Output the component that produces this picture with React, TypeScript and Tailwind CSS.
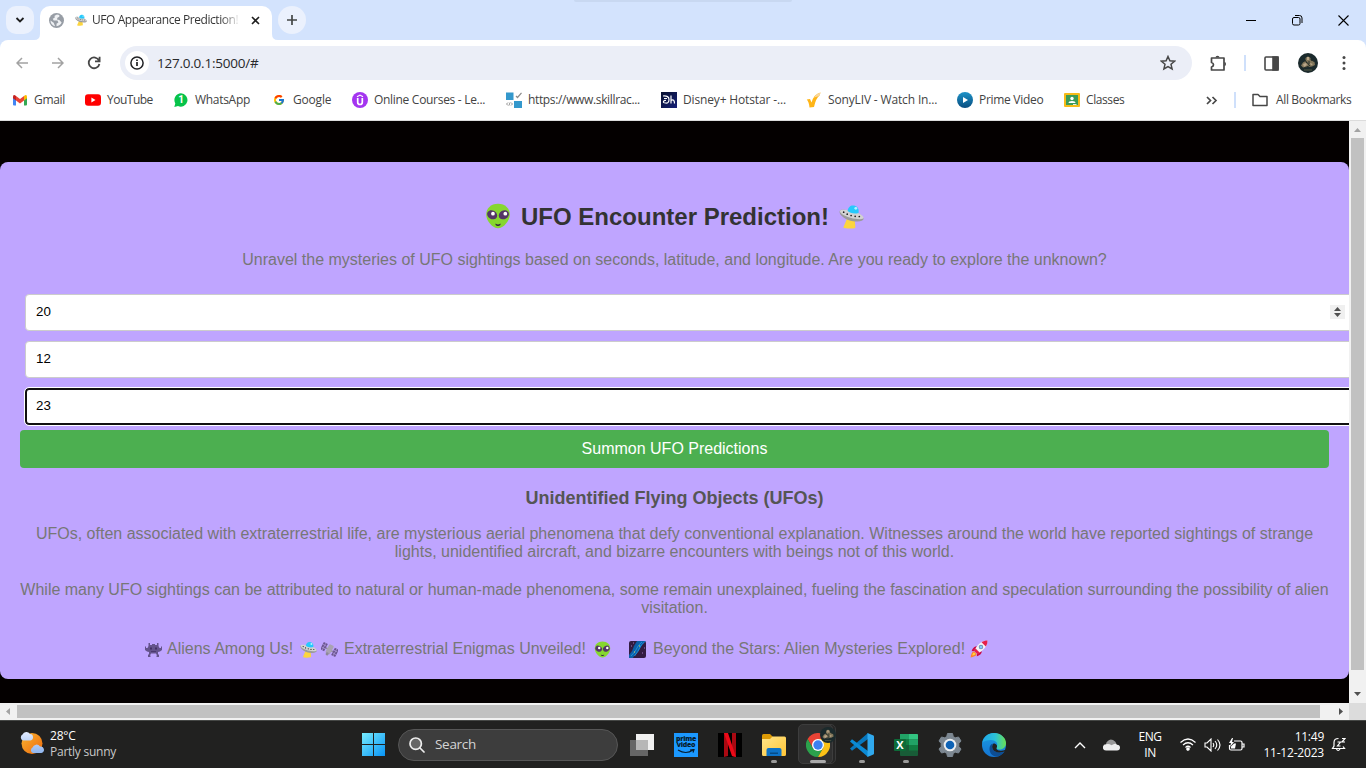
import React from "react";
import { FcGoogle } from "react-icons/fc";

type IconProps = { size?: number };

const ui = "font-['Open_Sans','Noto_Sans',sans-serif]";

/* ---------- Emoji drawings ---------- */

function Alien({ size = 26 }: IconProps) {
  return (
    <svg width={size} height={size} viewBox="0 0 32 32" className="shrink-0">
      <path d="M16 1C7 1 1.500 7 1.500 14c0 8 8 17 14.500 17s14.500-9 14.500-17C30.500 7 25 1 16 1Z" fill="#86d72f" />
      <ellipse cx="8.800" cy="14.500" rx="6.500" ry="5.300" transform="rotate(30 8.800 14.500)" fill="#533566" />
      <ellipse cx="23.200" cy="14.500" rx="6.500" ry="5.300" transform="rotate(-30 23.200 14.500)" fill="#533566" />
      <circle cx="9.800" cy="13.200" r="2.300" fill="#fff" />
      <circle cx="25" cy="13.200" r="2.300" fill="#fff" />
      <path d="M13 25.200q3 2.600 6 0v1.800q-3 2.400-6 0Z" fill="#321b41" />
    </svg>
  );
}

function Saucer({ size = 26 }: IconProps) {
  return (
    <svg width={size} height={size} viewBox="0 0 32 32" className="shrink-0">
      <path d="M11 17 5.500 30c2 1.600 12 2 15.500.3L20 19Z" fill="#fcd53f" />
      <path d="M1 9c-2 5 8 12 17 13 8 1 13 0 13.500-3 .3-3-6-8-16-10C8 7.500 2 6.500 1 9Z" fill="#9b9b9b" />
      <path d="M1 9c1 5 12 9 20 10 6 .8 10 .5 10.500-1 .3-3-6-7.500-16-9.500C8 7 2 6.500 1 9Z" fill="#d3d3d3" />
      <path d="M11 9C11.500 3.500 15.500 1 19.500 2c4.500 1 6.500 5 5.500 9.500-4.500 1.500-11 .5-14-2.500Z" fill="#26c9fc" />
      <circle cx="21.500" cy="5.500" r="1.800" fill="#b4f1ff" />
      <g fill="#212121">
        <circle cx="6" cy="10.500" r="1.100" />
        <circle cx="10.500" cy="13" r="1.100" />
        <circle cx="15.500" cy="14.700" r="1.100" />
        <circle cx="20.700" cy="15.800" r="1.100" />
        <circle cx="26" cy="16" r="1.100" />
      </g>
    </svg>
  );
}

function Monster({ size = 17 }: IconProps) {
  return (
    <svg width={size} height={size} viewBox="0 0 17 17" className="shrink-0">
      <path d="M3.500 2h1.500v2h2V3h3v1h2V2h1.500v3l1 2H16V5.500h1V9l-2 1.500-2 .5v2l1 1v2h-2.500v-1.500h.5l-1-2H6l-1 2h.5V16H3v-2l1-1v-2l-2-.5L0 9V5.500h1V7h1.500l1-2Z" fill="#64538b" />
      <path d="M5 6.500h2v2H5zM10 6.500h2v2h-2z" fill="#433064" />
      <path d="M6 10.500h5" stroke="#4b386e" />
    </svg>
  );
}

function Satellite({ size = 17 }: IconProps) {
  return (
    <svg width={size} height={size} viewBox="0 0 17 17" className="shrink-0">
      <g transform="rotate(28 8.500 8.500)">
        <path d="M0 4.500h4.500v8H0zM12.500 4.500H17v8h-4.500z" fill="#6b5591" />
        <path d="M0 7h4.500M0 10h4.500M12.500 7H17M12.500 10H17M2.300 4.500v8M14.700 4.500v8" stroke="#a994d4" strokeWidth=".7" />
        <path d="M4.500 8h8v1.500h-8z" fill="#8d8798" />
        <rect x="6" y="3.500" width="5" height="9.500" rx="1" fill="#a9a3b2" />
        <circle cx="8.500" cy="13.500" r="1.500" fill="#8d8798" />
      </g>
    </svg>
  );
}

function MilkyWay({ size = 17 }: IconProps) {
  return (
    <svg width={size} height={size} viewBox="0 0 17 17" className="shrink-0">
      <rect width="17" height="17" rx="2" fill="#321b41" />
      <path d="M8 0h9Q14 2 12 6T7 13t-3 4H0v-3l3-4 2-5Z" fill="#0b5fa8" />
      <path d="M13 1Q9 4 8 7t-6 8M15.500 1q-4 3-5 6t-5 8" stroke="#1e91d8" strokeWidth="1" fill="none" />
      <path d="M2 5h1M13 12h1M15 7h1M4 2h1" stroke="#9d7ac0" />
      <path d="M5 11h1M10 5h1" stroke="#e9d35b" />
    </svg>
  );
}

function Rocket({ size = 18 }: IconProps) {
  return (
    <svg width={size} height={size} viewBox="0 0 32 32" className="shrink-0">
      <path d="M7 20c-4 1-5 6-6 11 5-1 10-2 11-6Z" fill="#ff822d" />
      <path d="M7 22c-2 1-2.500 3-3 5.500 2.500-.5 5-1 6-3Z" fill="#fcd53f" />
      <path d="M12 11C8 11 4 15 3 20l7-1ZM21 20c0 4-4 8-9 9l1-7Z" fill="#ca0b4a" />
      <path d="M31 1C22 1 15 6 8 18l6 6C26 17 31 10 31 1Z" fill="#f4f4f4" />
      <path d="M31 1c-4 0-7.500 1-10.500 3L28 11.500C30.500 8.500 31 5 31 1ZM10 15l-3 4 6 6 4-3Z" fill="#e6204a" />
      <circle cx="19.500" cy="12.500" r="4" fill="#6e8fb0" />
      <circle cx="19.500" cy="12.500" r="2.500" fill="#83cbff" />
    </svg>
  );
}

/* ---------- Browser icons ---------- */

function Portrait({ size = 20 }: IconProps) {
  return (
    <svg width={size} height={size} viewBox="0 0 20 20" className="shrink-0">
      <circle cx="10" cy="10" r="10" fill="#1b2a2c" />
      <path d="M7.500 5q2.500-3 5 0v2l4 2 .5 3-3 1.500-4 .5-5 .5-2-2 2-3 2.500-1.500Z" fill="#81765a" />
      <path d="M9 4h2v3H9zM5 11l3-1 1 2-3 2zM12 10l3 1-2 1.500z" fill="#b9a689" />
      <path d="M8 8.500 12 13M6 15l5-2M13 7l3 1M7 7l2 3M11 8v3" stroke="#262f2a" strokeWidth="1" />
      <path d="M6 17h8" stroke="#555b45" />
    </svg>
  );
}

function Globe() {
  return (
    <svg width="15" height="15" viewBox="0 0 16 16" className="shrink-0">
      <circle cx="8" cy="8" r="8" fill="#979da5" />
      <path d="M8.500 1.500 6 3v2l-2 1 1 2h4l1 2-2 1.500V14q4-.5 5.500-4L11 7.500 8.500 7 9 5l2-1V2ZM1.500 8 5 10.500 6.500 14Q2 13 1.500 8Z" fill="#eef0f3" />
    </svg>
  );
}

function Gmail() {
  return (
    <svg width="16" height="16" viewBox="0 0 16 16">
      <path d="M1 5v7.500q0 1 1 1h2V7Z" fill="#4285f4" />
      <path d="M12 7v6.500h2q1 0 1-1V5Z" fill="#34a853" />
      <path d="M4 4v4.500l4 3 4-3V4L8 7Z" fill="#ea4335" />
      <path d="M1 4.500v1.800l3 2.200V4Q1.500 2 1 4.500Z" fill="#c5221f" />
      <path d="M15 4.500v1.800l-3 2.200V4Q14.500 2 15 4.500Z" fill="#fbbc04" />
    </svg>
  );
}

function YouTube() {
  return (
    <svg width="16" height="16" viewBox="0 0 16 16">
      <rect y="2.300" width="16" height="11.400" rx="3" fill="#f00" />
      <path d="M6.400 5.600v4.800L10.500 8Z" fill="#fff" />
    </svg>
  );
}

function WhatsApp() {
  return (
    <div className="relative size-4">
      <svg width="16" height="16" viewBox="0 0 16 16">
        <path d="M8 1.300a6.700 6.700 0 1 1-3 12.800L1.300 15l1-3.600A6.700 6.700 0 0 1 8 1.300Z" fill="#07c34a" />
      </svg>
      <span className="absolute inset-0 text-center font-['Roboto',sans-serif] text-[10px] leading-4 font-bold text-white">1</span>
    </div>
  );
}

function Udemy() {
  return (
    <svg width="16" height="16" viewBox="0 0 16 16">
      <circle cx="8" cy="8" r="8" fill="#a435f0" />
      <path d="m5 4.800 3-1.700 3 1.700" fill="none" stroke="#fff" strokeWidth="1.200" />
      <path d="M5.700 6v4.200q0 2.300 2.300 2.300t2.300-2.300V6" fill="none" stroke="#fff" strokeWidth="1.700" />
    </svg>
  );
}

function SkillRack() {
  return (
    <svg width="16" height="16" viewBox="0 0 16 16">
      <path d="M0 .5h7.500V8H0zM8 9h8v7H8z" fill="#3498cc" />
      <path d="m10 4 1.500 1.500L15.500.800" stroke="#8b8b8b" fill="none" strokeWidth="1.200" />
      <path d="m2 10.500-1.500 1.500L2 13.500M5 10.500 6.500 12 5 13.500M4 10.500l-1 3" stroke="#777" strokeWidth=".8" fill="none" />
    </svg>
  );
}

function Hotstar() {
  return (
    <div className="flex size-4 items-center justify-center bg-linear-to-br from-[#09102f] to-[#151f78]">
      <svg width="14" height="10" viewBox="0 0 14 10" fill="none" stroke="#fff" strokeWidth="1.200">
        <path d="M2 3.500h3M1 1q6-.5 6 3.500T3.500 8Q1 8 1.500 6.500T4 5.500M9 .500V8.500M9 5.500q3.500-2 3.500 3" />
      </svg>
    </div>
  );
}

function Sony() {
  return (
    <svg width="16" height="16" viewBox="0 0 16 16">
      <path d="M.8 7.500 4 7l1.500 3.500Q8 2 14.500.5l-1 3Q10 6 8 15l-4.500.5Q3 10 .8 7.500Z" fill="#ffb516" />
      <path d="M8 5.500q2.500-4 6.500-5L13.500 4Z" fill="#f8d79e" />
    </svg>
  );
}

function Prime() {
  return (
    <svg width="16" height="16" viewBox="0 0 16 16">
      <defs>
        <linearGradient id="prime" x2="0" y2="1">
          <stop stopColor="#1e93c8" />
          <stop offset="1" stopColor="#084d80" />
        </linearGradient>
      </defs>
      <circle cx="8" cy="8" r="8" fill="url(#prime)" />
      <path d="M6 5v6l5-3Z" fill="#fff" />
    </svg>
  );
}

function Classroom() {
  return (
    <svg width="16" height="16" viewBox="0 0 16 16">
      <rect y="1" width="16" height="14" rx="1" fill="#f6bb18" />
      <path d="M2 3h12v10H2z" fill="#3b9b57" />
      <circle cx="8" cy="6.500" r="1.700" fill="#fff" />
      <path d="M4.500 11q0-2 3.500-2t3.500 2Z" fill="#fff" />
      <path d="M9 12h3.500v1H9z" fill="#e4eee4" />
    </svg>
  );
}

/* ---------- Taskbar icons ---------- */

function Weather() {
  return (
    <svg width="26" height="26" viewBox="0 0 26 26">
      <defs>
        <linearGradient id="sun" x2="1" y2="1">
          <stop stopColor="#f9b531" />
          <stop offset="1" stopColor="#ed680c" />
        </linearGradient>
        <linearGradient id="cloud" x2="0" y2="1">
          <stop stopColor="#e2ecff" />
          <stop offset="1" stopColor="#8fb5ee" />
        </linearGradient>
      </defs>
      <circle cx="13" cy="12.500" r="10.500" fill="url(#sun)" />
      <path d="M4 9.500a3.300 3.300 0 0 1-.5-6A4.300 4.300 0 0 1 11 3a3.300 3.300 0 0 1 .5 6.500ZM14 22a3 3 0 0 1-.5-5.500 4.200 4.200 0 0 1 7.500-1 3.200 3.200 0 0 1 1.300 6.500Z" fill="url(#cloud)" />
    </svg>
  );
}

function Windows() {
  return (
    <svg width="23" height="23" viewBox="0 0 23 23">
      <defs>
        <linearGradient id="win" x2="1" y2="1" gradientUnits="objectBoundingBox">
          <stop stopColor="#77edff" />
          <stop offset="1" stopColor="#0893f5" />
        </linearGradient>
      </defs>
      <path d="M0 0h11v11H0zM12 0h11v11H12zM0 12h11v11H0zM12 12h11v11H12z" fill="url(#win)" />
    </svg>
  );
}

function TaskView() {
  return (
    <svg width="24" height="22" viewBox="0 0 24 22">
      <path d="M6 0h18v16H6z" fill="#f0f0f0" />
      <path d="M0 6h18v16H0z" fill="#666" />
      <path d="M6 6h12v10H6z" fill="#b7b7b7" />
    </svg>
  );
}

function Netflix() {
  return (
    <svg width="24" height="24" viewBox="0 0 24 24">
      <path d="M0 0h24v24H0z" fill="#000" />
      <path d="M6 0h4v23l-4 1zM14 0h4v24l-4-1z" fill="#a90912" />
      <path d="M6 0h4l8 24-4-1Z" fill="#ed0a18" />
    </svg>
  );
}

function Explorer() {
  return (
    <svg width="24" height="24" viewBox="0 0 24 24">
      <defs>
        <linearGradient id="folder" x2="1" y2="1">
          <stop stopColor="#ffe58a" />
          <stop offset="1" stopColor="#ffc536" />
        </linearGradient>
      </defs>
      <path d="M0 5V2.500Q0 1 1.500 1H8l3 3-2 2H0Z" fill="#dd9a05" />
      <path d="M0 6h8l2.500-2.500h12Q24 3.500 24 5v16.500q0 1.500-1.500 1.500h-21Q0 23 0 21.500Z" fill="url(#folder)" />
      <path d="M4.500 23v-6q0-2 2-2h11q2 0 2 2v6Z" fill="#0d72c6" />
      <path d="M8 19.500h8v1.500H8z" fill="#064b85" />
    </svg>
  );
}

function Chrome() {
  return (
    <svg width="24" height="24" viewBox="0 0 24 24">
      <path d="M1.600 6A12 12 0 0 1 22.400 6H12l-5.200 9Z" fill="#e94335" />
      <path d="M1.600 6 6.800 15 12 18l5.200-3L12 24A12 12 0 0 1 1.600 6Z" fill="#2ba24c" />
      <path d="M22.400 6A12 12 0 0 1 12 24l5.200-9V9L12 6Z" fill="#fbc116" />
      <circle cx="12" cy="12" r="6" fill="#fff" />
      <circle cx="12" cy="12" r="4.700" fill="#3c80f0" />
    </svg>
  );
}

function Code() {
  return (
    <svg width="24" height="24" viewBox="0 0 24 24">
      <path d="M18 0 0 15.500l2 2.200L18 6Z" fill="#0877bd" />
      <path d="M18 24 0 8.500l2-2.200L18 18Z" fill="#0b8ad5" />
      <path d="m17.500 0 6 2.500Q24 3 24 3.500v17q0 .7-.6 1L17.500 24Z" fill="#30a9ee" />
    </svg>
  );
}

function Excel() {
  return (
    <div className="relative h-[22px] w-6">
      <svg width="24" height="22" viewBox="0 0 24 22">
        <rect x="6" width="18" height="22" rx="1" fill="#185c37" />
        <path d="M6 0h9v5.500H6z" fill="#21a366" />
        <path d="M15 0h8q1 0 1 1v4.500h-9z" fill="#33c481" />
        <path d="M6 5.500h9V11H6z" fill="#107c41" />
        <path d="M15 5.500h9V11h-9z" fill="#21a366" />
        <path d="M15 11h9v5.500h-9z" fill="#107c41" />
        <rect y="5" width="12" height="12" rx="1" fill="#0d6b38" />
      </svg>
      <span className="absolute top-[5px] left-0 w-3 text-center font-['Open_Sans',sans-serif] text-[11px] leading-3 font-bold text-white">X</span>
    </div>
  );
}

function Settings() {
  return (
    <svg width="24" height="24" viewBox="0 0 24 24">
      <path
        d="m9.500.500-.8 3.200-2 1.100L3.500 4 1 8l2.200 2.500v3L1 16l2.500 4 3.200-.8 2 1.100.8 3.200h5l.8-3.200 2-1.100 3.200.8 2.500-4-2.200-2.500v-3L23 8l-2.500-4-3.200.8-2-1.100-.8-3.200Z"
        fill="#7c8791"
        stroke="#7c8791"
        strokeLinejoin="round"
      />
      <circle cx="12" cy="12" r="6.300" fill="#eceef0" />
      <circle cx="12" cy="12" r="4.300" fill="#0d62b5" />
    </svg>
  );
}

function Edge() {
  return (
    <svg width="24" height="24" viewBox="0 0 24 24">
      <defs>
        <linearGradient id="edgeTop" x2="1">
          <stop stopColor="#1ea6ec" />
          <stop offset=".55" stopColor="#2cc2d6" />
          <stop offset="1" stopColor="#6ae052" />
        </linearGradient>
        <linearGradient id="edgeLeft" x2="0" y2="1">
          <stop stopColor="#1b9de2" />
          <stop offset="1" stopColor="#1474d2" />
        </linearGradient>
      </defs>
      <circle cx="12" cy="12" r="12" fill="url(#edgeLeft)" />
      <path d="M.2 10C1 4 6 0 12 0c7 0 12 5 12 10 0 4-3 6.500-6.500 6.500-3 0-4-1.200-3-2.500C17 10 13 7 9 7c-4 0-7.500 1-8.800 3Z" fill="url(#edgeTop)" />
      <path d="M8 13c-2 6 2 11 8 10.500 3-1 5.500-3 6.800-5.200C17 21 10 19 10 13.500c0-1.500.5-2.500 1.500-3Q9 10.500 8 13Z" fill="#0d4d93" />
      <path d="M11.500 10.500C9 13 10 18 15 19.200c3 .7 6 0 7.800-.9q.5-1 .2-1.300c-3 1.500-9 .8-8.500-2 1.500-2 0-4.500-3-4.500Z" fill="#222" />
    </svg>
  );
}

/* ---------- Browser chrome ---------- */

function TabStrip() {
  return (
    <div className="flex h-10 items-start bg-[#d3e3fd] pl-1.5">
      <button className="mt-1.5 flex size-7 items-center justify-center rounded-[10px] bg-[#ebf1fd]">
        <svg width="10" height="8" viewBox="0 0 10 8" fill="none" stroke="#1f1f1f" strokeWidth="1.800">
          <path d="m1.500 2 3.500 3.500L8.500 2" />
        </svg>
      </button>
      <svg width="6" height="6" viewBox="0 0 6 6" className="mt-[34px]">
        <path d="M6 0v6H0Q6 6 6 0Z" fill="#fff" />
      </svg>
      <div className="mt-1.5 flex h-[34px] w-[232px] items-center rounded-t-[10px] bg-white pb-1.5">
        <div className="ml-[9px] flex w-[26px]"><Globe /></div>
        <Saucer size={12} />
        <span className={`${ui} ml-[5px] w-[147px] bg-linear-to-r from-[#333] from-88% to-[#3331] bg-clip-text text-[12px] tracking-[-0.44px] whitespace-nowrap text-transparent`}>
          UFO Appearance Prediction!
        </span>
        <svg width="9" height="9" viewBox="0 0 9 9" className="ml-3" stroke="#1f1f1f" strokeWidth="1.600">
          <path d="m1 1 7 7M8 1 1 8" />
        </svg>
      </div>
      <svg width="6" height="6" viewBox="0 0 6 6" className="mt-[34px]">
        <path d="M0 0v6h6Q0 6 0 0Z" fill="#fff" />
      </svg>
      <button className="mt-1.5 flex size-7 items-center justify-center rounded-full bg-[#ebf1fd]">
        <svg width="12" height="12" viewBox="0 0 12 12" stroke="#444746" strokeWidth="1.700">
          <path d="M6 1v10M1 6h10" />
        </svg>
      </button>
      <div className="ml-[268px] h-0.5 w-[218px] rounded-b bg-[#c8d8f1]" />
      <div className="mt-[15px] ml-auto flex pr-[17px] text-black">
        <svg width="10" height="11" viewBox="0 0 10 11" stroke="currentColor"><path d="M0 5.500h10" /></svg>
        <svg width="11" height="11" viewBox="0 0 11 11" fill="none" stroke="currentColor" className="ml-9">
          <rect x=".5" y="2.500" width="7.500" height="7.500" rx="1.500" />
          <path d="M3 .5h4.500q2.500 0 2.500 2.500v5" />
        </svg>
        <svg width="11" height="11" viewBox="0 0 11 11" stroke="currentColor" strokeWidth="1.100" className="ml-[35px]">
          <path d="m.5.500 10 10M10.500.500l-10 10" />
        </svg>
      </div>
    </div>
  );
}

function Toolbar() {
  return (
    <div className="h-[46px] bg-[#d3e3fd]">
      <div className="flex h-full items-center rounded-t-lg bg-white text-[#474747]">
        <svg width="12" height="12" viewBox="0 0 12 12" fill="none" stroke="#a2a2a2" strokeWidth="1.500" className="ml-4">
          <path d="M12 6H1M6 1 1 6l5 5" />
        </svg>
        <svg width="12" height="12" viewBox="0 0 12 12" fill="none" stroke="#a2a2a2" strokeWidth="1.500" className="ml-6">
          <path d="M0 6h11M6 1l5 5-5 5" />
        </svg>
        <svg width="14" height="14" viewBox="0 0 14 14" fill="none" stroke="currentColor" strokeWidth="1.800" className="ml-[23px]">
          <path d="M12 4.500A5.400 5.400 0 1 0 12.400 8M12.600.800v4.500H8" />
        </svg>
        <div className="ml-[19px] flex h-[34px] w-[1072px] items-center rounded-full bg-[#ebeef7] pl-[5px]">
          <span className="flex size-6 items-center justify-center rounded-full bg-white">
            <svg width="14" height="14" viewBox="0 0 14 14" fill="none" stroke="#202124" strokeWidth="1.500">
              <circle cx="7" cy="7" r="6.100" />
              <path d="M7 6v4M7 3.500V5" strokeWidth="1.700" />
            </svg>
          </span>
          <span className={`${ui} ml-2 text-[13.500px] tracking-[-0.23px] text-[#28292b]`}>127.0.0.1:5000/#</span>
          <svg width="16" height="16" viewBox="0 0 16 16" fill="none" stroke="currentColor" strokeWidth="1.500" className="mr-4 ml-auto">
            <path d="m8 1.500 1.900 4.300 4.700.4-3.600 3.100 1.100 4.600L8 11.500l-4.100 2.400L5 9.300 1.400 6.200l4.700-.4Z" />
          </svg>
        </div>
        <svg width="17" height="17" viewBox="0 0 17 17" fill="none" stroke="currentColor" strokeWidth="1.700" strokeLinejoin="round" className="ml-[18px]">
          <path d="M1.500 3H14v12H1.500v-3q2-.5 2-2.200t-2-2.300Z" />
          <path d="M5.500 2.500a2 1.800 0 0 1 4 0ZM14.500 7a1.500 2 0 0 1 0 4Z" fill="currentColor" stroke="none" />
        </svg>
        <div className="ml-[17px] h-4 w-0.5 bg-[#cfe0fb]" />
        <svg width="15" height="15" viewBox="0 0 15 15" fill="none" stroke="currentColor" strokeWidth="1.600" className="ml-[18px]">
          <rect x="1" y="1" width="13" height="13" rx="1" />
          <path d="M9 1h5v13H9z" fill="currentColor" />
        </svg>
        <div className="ml-[19px]"><Portrait /></div>
        <svg width="4" height="16" viewBox="0 0 4 16" fill="currentColor" className="ml-6">
          <circle cx="2" cy="2.500" r="1.500" /><circle cx="2" cy="8" r="1.500" /><circle cx="2" cy="13.500" r="1.500" />
        </svg>
      </div>
    </div>
  );
}

function Bookmark({ icon, label, width }: { icon: React.ReactNode; label: string; width: string }) {
  return (
    <div className={`flex shrink-0 items-center gap-1.5 ${width}`}>
      {icon}
      <span className="whitespace-nowrap">{label}</span>
    </div>
  );
}

function BookmarksBar() {
  return (
    <div className={`${ui} flex h-[35px] items-center border-b border-[#dcdcdc] bg-white pb-1.5 pl-3 text-[12px] tracking-[-0.3px] text-[#434343]`}>
      <Bookmark icon={<Gmail />} label="Gmail" width="w-[73px]" />
      <Bookmark icon={<YouTube />} label="YouTube" width="w-[88px] tracking-[-0.5px]" />
      <Bookmark icon={<WhatsApp />} label="WhatsApp" width="w-[98px]" />
      <Bookmark icon={<FcGoogle className="m-[2px] size-3" />} label="Google" width="w-[81px] tracking-[-0.2px]" />
      <Bookmark icon={<Udemy />} label="Online Courses - Le..." width="w-[154px]" />
      <Bookmark icon={<SkillRack />} label="https://www.skillrac..." width="w-[155px] tracking-[-0.35px]" />
      <Bookmark icon={<Hotstar />} label="Disney+ Hotstar -..." width="w-[145px] tracking-[-0.15px]" />
      <Bookmark icon={<Sony />} label="SonyLIV - Watch In..." width="w-[151px] tracking-[-0.15px]" />
      <Bookmark icon={<Prime />} label="Prime Video" width="w-[107px]" />
      <Bookmark icon={<Classroom />} label="Classes" width="w-[142px] tracking-[-0.4px]" />
      <svg width="12" height="9" viewBox="0 0 12 9" fill="none" stroke="#474747" strokeWidth="1.700">
        <path d="m1 1 3.500 3.500L1 8M6.500 1 10 4.500 6.500 8" />
      </svg>
      <div className="ml-4 h-4 w-0.5 bg-[#cfe0fb]" />
      <svg width="16" height="14" viewBox="0 0 16 14" fill="none" stroke="#474747" strokeWidth="1.500" strokeLinejoin="round" className="mr-2 ml-4">
        <path d="M1 12.500v-11h5L8 3.500h7v9Z" />
      </svg>
      <span className="tracking-[-0.35px] whitespace-nowrap">All Bookmarks</span>
    </div>
  );
}

/* ---------- Web page ---------- */

function Field({ value, focused = false, spinner = false }: { value: string; focused?: boolean; spinner?: boolean }) {
  return (
    <div
      className={`flex h-[37px] w-[1349px] shrink-0 items-center rounded-[4px] bg-white pb-px text-[13.333px] text-black ${
        focused ? "border-2 border-[#101010] pl-[9px] outline outline-white" : "border border-[#ccc] pl-[10px]"
      }`}
    >
      <span className="w-[1294px]">{value}</span>
      {spinner && (
        <svg width="15" height="14" viewBox="0 0 15 14">
          <path d="M0 0h15v14H0z" fill="#f0f0f0" />
          <path d="M4 6h7L7.500 2ZM4 8h7l-3.500 4Z" fill="#505050" />
        </svg>
      )}
    </div>
  );
}

function PageContent() {
  return (
    <main className="h-[582px] w-[1349px] overflow-hidden bg-[#040000] pt-[41px] font-['Liberation_Sans',Arial,sans-serif] text-[16px] leading-[18px] text-[#777]">
      <section className="h-[517px] overflow-hidden rounded-[8px] bg-[#bfa5ff] px-5 pt-10 text-center">
        <h1 className="flex h-[29px] items-center justify-center text-[24px] leading-[28px] font-bold text-[#333]">
          <span className="-mt-px"><Alien size={26} /></span>
          <span className="mr-2.5 ml-2.5">UFO Encounter Prediction!</span>
          <Saucer size={25} />
        </h1>
        <p className="mt-5">
          Unravel the mysteries of UFO sightings based on seconds, latitude, and longitude. Are you ready to explore the unknown?
        </p>
        <form className="mt-[25px] ml-[5px] flex flex-col gap-2.5 text-left">
          <Field value="20" spinner />
          <Field value="12" />
          <Field value="23" focused />
        </form>
        <button className="relative mt-[5px] block h-[38px] w-full rounded-[4px] bg-[#4caf50] text-[16px] text-white">
          Summon UFO Predictions
        </button>
        <h2 className="mt-5 text-[18px] leading-[21px] font-bold text-[#555]">Unidentified Flying Objects (UFOs)</h2>
        <p className="mt-4">
          UFOs, often associated with extraterrestrial life, are mysterious aerial phenomena that defy conventional explanation. Witnesses around the world have reported sightings of strange lights, unidentified aircraft, and bizarre encounters with beings not of this world.
        </p>
        <p className="mt-5">
          While many UFO sightings can be attributed to natural or human-made phenomena, some remain unexplained, fueling the fascination and speculation surrounding the possibility of alien visitation.
        </p>
        <div className="mt-[23px] ml-[125px] flex items-center whitespace-nowrap">
          <Monster />
          <span className="mr-1 ml-[5px] w-[129px] text-left">Aliens Among Us!</span>
          <Saucer size={17} />
          <span className="ml-1"><Satellite /></span>
          <span className="mr-1.5 ml-1.5 w-[244px] text-left">Extraterrestrial Enigmas Unveiled!</span>
          <Alien size={17} />
          <span className="ml-[18px]"><MilkyWay /></span>
          <span className="mr-1 ml-[7px] w-[313px] text-left tracking-[0.02px]">Beyond the Stars: Alien Mysteries Explored!</span>
          <Rocket />
        </div>
      </section>
    </main>
  );
}

function Viewport() {
  return (
    <div className="grid h-[599px] grid-cols-[1349px_17px] grid-rows-[582px_17px]">
      <PageContent />
      <div className="flex flex-col items-center bg-[#f1f1f1]">
        <svg width="17" height="17" viewBox="0 0 17 17"><path d="M5 11h7L8.500 7Z" fill="#a3a3a3" /></svg>
        <div className="h-[532px] w-[13px] bg-[#c1c1c1]" />
        <svg width="17" height="17" viewBox="0 0 17 17" className="mt-auto"><path d="M5 6h7l-3.500 4Z" fill="#505050" /></svg>
      </div>
      <div className="flex items-center bg-[#f1f1f1]">
        <svg width="17" height="17" viewBox="0 0 17 17"><path d="M10 5v7L6 8.500Z" fill="#a3a3a3" /></svg>
        <div className="h-[13px] w-[1303px] bg-[#c1c1c1]" />
        <svg width="17" height="17" viewBox="0 0 17 17" className="ml-auto"><path d="M7 5v7l4-3.500Z" fill="#505050" /></svg>
      </div>
      <div className="bg-[#dcdcdc]" />
    </div>
  );
}

/* ---------- Taskbar ---------- */

function TaskItem({ children, running = false }: { children: React.ReactNode; running?: boolean }) {
  return (
    <div className="relative flex h-[47px] w-11 items-center justify-center">
      {children}
      {running && <span className="absolute bottom-[5px] left-[19px] h-[3px] w-1.5 rounded-full bg-[#999]" />}
    </div>
  );
}

function Taskbar() {
  return (
    <footer className={`${ui} flex h-12 items-center border-t border-[#454745] bg-[#212120] text-[12px] text-white`}>
      <div className="flex w-[351px] items-center pb-px pl-[19px]">
        <Weather />
        <div className="ml-[5px] leading-4 tracking-[-0.25px]">
          <div className="tracking-[-0.2px]">28°C</div>
          <div className="text-[#c9c9c9]">Partly sunny</div>
        </div>
      </div>
      <TaskItem><Windows /></TaskItem>
      <div className="mr-0.5 ml-[3px] flex h-8 w-[220px] items-center rounded-full border border-[#565656] bg-[#3d3d3d] pl-2.5">
        <svg width="16" height="16" viewBox="0 0 16 16" fill="#666" stroke="#eee" strokeWidth="1.700" strokeLinecap="round">
          <circle cx="6.700" cy="6.700" r="5.700" /><path d="m11 11 4 4" />
        </svg>
        <span className="ml-2.5 text-[13.500px] tracking-[-0.3px] text-[#d4d4d4]">Search</span>
      </div>
      <TaskItem><TaskView /></TaskItem>
      <TaskItem>
        <div className="flex size-6 flex-col items-center bg-[#1b98ff] pt-[3px] font-['Open_Sans',sans-serif] text-[7px] leading-[6.500px] font-extrabold tracking-[-0.3px] text-[#071c2d]">
          <span>prime</span><span>video</span>
          <svg width="18" height="5" viewBox="0 0 18 5" fill="none" stroke="#071c2d" strokeWidth="1.200"><path d="M1 1q8 5 15 0m-3 0 4-.5-1 3" /></svg>
        </div>
      </TaskItem>
      <TaskItem><Netflix /></TaskItem>
      <TaskItem running><Explorer /></TaskItem>
      <div className="relative flex h-[47px] w-11 items-center justify-center">
        <div className="absolute top-[3px] left-1 h-10 w-[36px] rounded-[5px] border border-[#393939] bg-[#262626]" />
        <div className="absolute top-[3px] left-0.5 h-10 w-[35px] rounded-[5px] border border-[#3d3d3d] bg-[#303030]" />
        <div className="relative"><Chrome /></div>
        <div className="absolute top-[6px] left-6"><Portrait size={16} /></div>
        <span className="absolute bottom-[5px] left-[14px] h-[3px] w-4 rounded-full bg-[#aaa]" />
      </div>
      <TaskItem running><Code /></TaskItem>
      <TaskItem running><Excel /></TaskItem>
      <TaskItem><Settings /></TaskItem>
      <TaskItem><Edge /></TaskItem>
      <div className="ml-auto flex items-center">
        <svg width="12" height="8" viewBox="0 0 12 8" fill="none" stroke="#fff" strokeWidth="1.400"><path d="m1 7 5-5 5 5" /></svg>
        <svg width="17" height="12" viewBox="0 0 17 12" className="ml-[17px]">
          <path d="M4 8a4.500 4.500 0 0 1 .8-6Q7-.5 10 1t3.500 4l-3 4Z" fill="#999" />
          <path d="M3 11.500a3 3 0 0 1 0-6.200q3-1 5.500 1 4-3 5.500-.5 3 .3 3 2.800 0 2.900-3 2.900Z" fill="#eee" />
        </svg>
        <div className="ml-[15px] w-[30px] text-center leading-4 tracking-[-0.4px]">
          <div>ENG</div><div>IN</div>
        </div>
        <svg width="16" height="13" viewBox="0 0 16 13" fill="none" stroke="#fff" strokeWidth="1.200" className="ml-[15px]">
          <path d="M.5 4.500q7.500-7 15 0M3 7q5-4.500 10 0M5.500 9.500q2.500-2.500 5 0" /><circle cx="8" cy="11" r="1.200" fill="#fff" />
        </svg>
        <svg width="17" height="14" viewBox="0 0 17 14" fill="none" stroke="#fff" strokeWidth="1.100" className="ml-2">
          <path d="M1 5h2l4-4v12L3 9H1ZM9 5q1.500 2 0 4M11 3q3.500 4 0 8M13.500 1.500q5 5.500 0 11" />
        </svg>
        <svg width="17" height="14" viewBox="0 0 17 14" fill="none" stroke="#fff" strokeWidth="1.200" className="ml-[7px]">
          <path d="M6 3h6.500Q14 3 14 4.500v6q0 1.500-1.500 1.500H3q-1.500 0-1.500-1.500V7M14.500 6h1.500v3h-1.500" />
          <path d="M4 0 1 5h2l-1 4 4-5H4l1-4ZM3 10.500V8.500l3-3h2L7 10.500Z" fill="#fff" stroke="none" />
        </svg>
        <div className="ml-[15px] w-[64px] text-right leading-4 tracking-[-0.2px] whitespace-nowrap">
          <div className="tracking-[-0.25px]">11:49</div><div>11-12-2023</div>
        </div>
        <div className="mr-5 ml-[7px] h-[15px] w-[15px]">
          <svg width="15" height="15" viewBox="0 0 15 15" fill="none" stroke="#fff" strokeWidth="1.200">
            <path d="M7.500 1.500q-4.500 0-4.500 4V9l-1.500 2.500h12L12 9.500M5.500 12q1.500 3 3.500 0M6.500 5h3l-3 4h3M11 1.500h3l-3 3.500h3" />
          </svg>
        </div>
      </div>
    </footer>
  );
}

export default function App() {
  return (
    <div className="flex h-[768px] w-[1366px] flex-col overflow-hidden bg-white">
      <TabStrip />
      <Toolbar />
      <BookmarksBar />
      <Viewport />
      <Taskbar />
    </div>
  );
}
